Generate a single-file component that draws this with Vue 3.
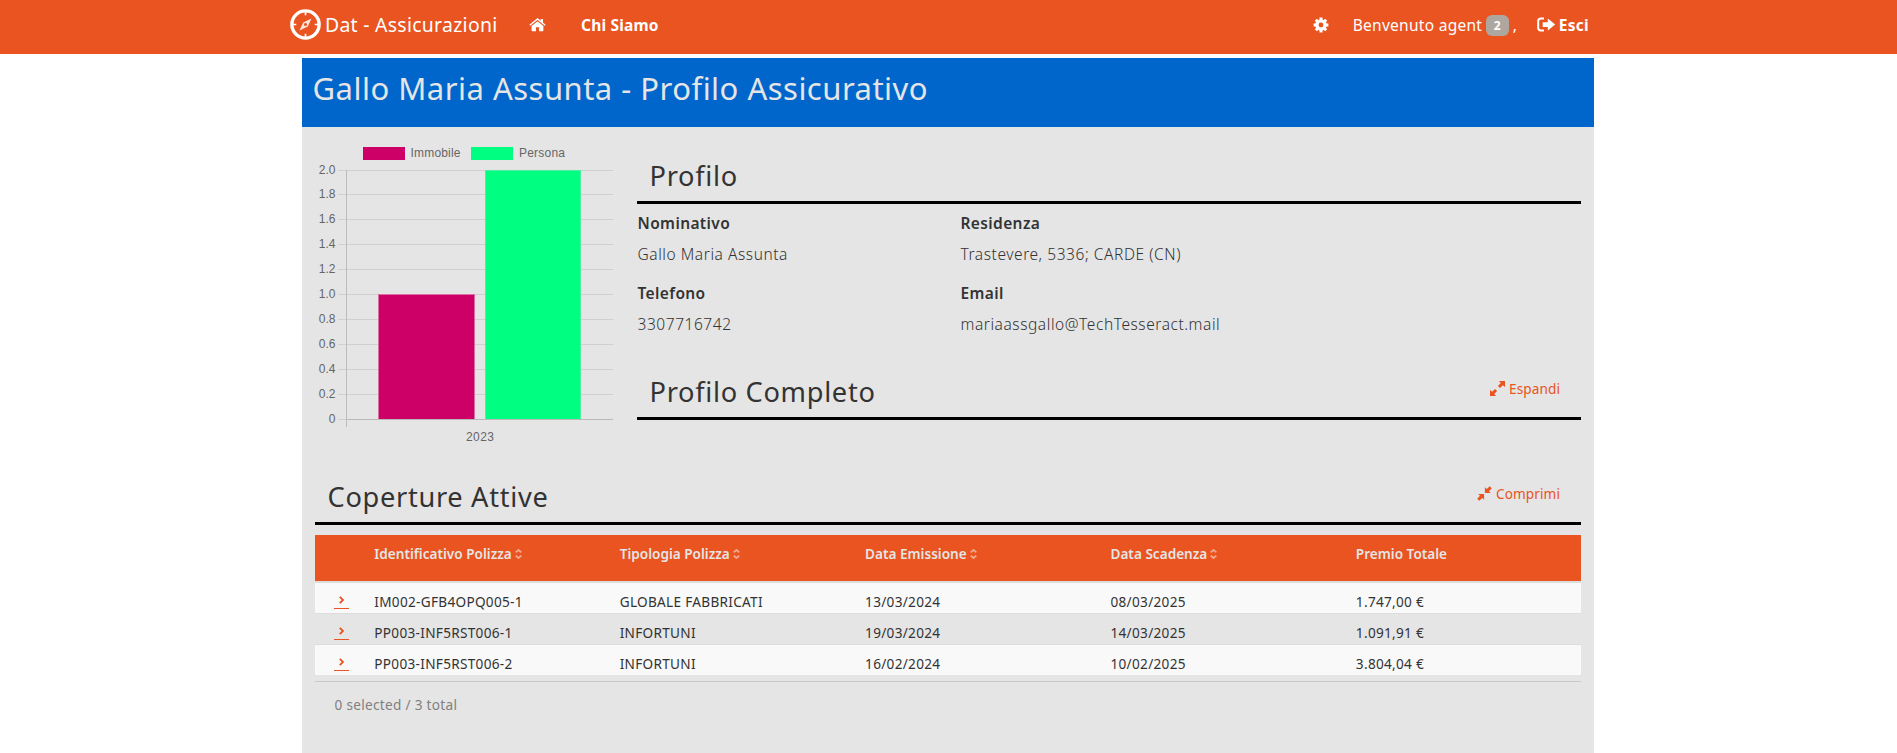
<script setup>
const ticks = ['2.0', '1.8', '1.6', '1.4', '1.2', '1.0', '0.8', '0.6', '0.4', '0.2', '0'].map((label, i) => ({
  label,
  y: Math.floor(43 + i * 24.92) + 0.5,
}))

const fields = [
  { label: 'Nominativo', value: 'Gallo Maria Assunta' },
  { label: 'Residenza', value: 'Trastevere, 5336; CARDE (CN)' },
  { label: 'Telefono', value: '3307716742' },
  { label: 'Email', value: 'mariaassgallo@TechTesseract.mail' },
]

const columns = [
  { title: 'Identificativo Polizza', sortable: true },
  { title: 'Tipologia Polizza', sortable: true },
  { title: 'Data Emissione', sortable: true },
  { title: 'Data Scadenza', sortable: true },
  { title: 'Premio Totale', sortable: false },
]

const policies = [
  ['IM002-GFB4OPQ005-1', 'GLOBALE FABBRICATI', '13/03/2024', '08/03/2025', '1.747,00 €'],
  ['PP003-INF5RST006-1', 'INFORTUNI', '19/03/2024', '14/03/2025', '1.091,91 €'],
  ['PP003-INF5RST006-2', 'INFORTUNI', '16/02/2024', '10/02/2025', '3.804,04 €'],
]
</script>

<template>
  <div class="page">
    <header class="navbar">
      <svg class="logo" width="31" height="31" viewBox="0 0 31 31">
        <circle cx="15.5" cy="15.5" r="13.600" fill="none" stroke="#fff" stroke-width="3.400" />
        <path d="M15.500 2.500v3.800M15.500 24.700v3.800M2.500 15.500h3.800M24.700 15.500h3.800" stroke="#fff" stroke-width="1.700" />
        <path fill-rule="evenodd" d="M21.500 9.500 17.800 17.400 9.500 21.500 13.200 13.600ZM15.500 13.900a1.600 1.600 0 1 0 .01 0Z" fill="#fff" fill-opacity=".85" />
      </svg>
      <span class="brand">Dat - Assicurazioni</span>
      <svg class="home" width="17" height="14" viewBox="0 0 17 14">
        <path d="M8.500 3.200 14.400 8.100V12.600a.6.6 0 0 1-.6.6H10.100V9.300H7V13.200H3.200a.6.6 0 0 1-.6-.6V8.100Z" fill="#fff" />
        <path d="M.8 7.200 8.500.9 16.200 7.200" fill="none" stroke="#fff" stroke-width="1.400" />
        <path d="M11.700 1h2.300v4.400l-2.300-2Z" fill="#fff" />
      </svg>
      <a class="about">Chi Siamo</a>
      <div class="user">
        <svg class="gear" width="16" height="16" viewBox="0 0 16 16">
          <path d="M8 .6V15.400M.6 8H15.400M2.800 2.800l10.400 10.400M13.200 2.800 2.800 13.200" stroke="#fff" stroke-width="3" />
          <circle cx="8" cy="8" r="4.100" fill="none" stroke="#fff" stroke-width="3.400" />
          <circle cx="8" cy="8" r="2.400" fill="#e95420" />
        </svg>
        <span class="welcome">Benvenuto agent</span>
        <span class="badge">2</span>
        <span class="comma">,</span>
        <svg class="exit" width="19" height="16" viewBox="0 0 19 16">
          <path d="M7 1.500H3.600A2.400 2.400 0 0 0 1.200 3.900v7.200a2.400 2.400 0 0 0 2.400 2.400H7" fill="none" stroke="#fff" stroke-width="2" />
          <path d="M5.700 5.200h5.100V1.600l7.400 6-7.400 6V9.900H5.700Z" fill="#fff" />
        </svg>
        <a class="logout">Esci</a>
      </div>
    </header>

    <main class="panel">
      <h1 class="title">Gallo Maria Assunta - Profilo Assicurativo</h1>

      <div class="overview">
        <svg class="chart" width="335" height="320" viewBox="0 0 335 320">
          <g class="legend">
            <rect x="61" y="20" width="42" height="13" fill="#cc0066" />
            <text x="108.500" y="30" textLength="50">Immobile</text>
            <rect x="169" y="20" width="42" height="13" fill="#00ff80" />
            <text x="217" y="30" textLength="46">Persona</text>
          </g>
          <g v-for="t in ticks" :key="t.label">
            <line x1="36" x2="311" :y1="t.y" :y2="t.y" stroke="#d0d0d0" />
            <text x="33.500" :y="t.y + 3.800" text-anchor="end">{{ t.label }}</text>
          </g>
          <rect x="76.500" y="167.500" width="96" height="125" fill="#cc0066" stroke="#dd6da2" />
          <rect x="183.500" y="43.500" width="95" height="249" fill="#00ff80" stroke="#4df0a0" />
          <path d="M44.500 43V300" stroke="#bcbcbc" />
          <path d="M44 292.500H311" stroke="#b9b9b9" />
          <text x="164" y="313.500" textLength="28">2023</text>
        </svg>

        <div class="details">
          <section class="section">
            <div class="section-head"><h2>Profilo</h2></div>
            <dl class="fields">
              <div v-for="f in fields" :key="f.label" class="field">
                <dt>{{ f.label }}</dt>
                <dd>{{ f.value }}</dd>
              </div>
            </dl>
          </section>
          <section class="section">
            <div class="section-head">
              <h2>Profilo Completo</h2>
              <a class="toggle">
                <svg width="15" height="15" viewBox="0 0 15 15" fill="#e95420">
                  <path d="M9 0H15V6L12.900 4.200 10 7.100 7.900 5 10.800 2.100Z" />
                  <path d="M6 15H0V9L2.100 10.800 5 7.900 7.100 10 4.200 12.900Z" />
                </svg>
                <span class="expand">Espandi</span>
              </a>
            </div>
          </section>
        </div>
      </div>

      <section class="section policies">
        <div class="section-head">
          <h2>Coperture Attive</h2>
          <a class="toggle">
            <svg width="15" height="15" viewBox="0 0 15 15" fill="#e95420">
              <path d="M7.900 7.100V1.200L9.800 3 12.700.2 14.800 2.300 12 5.200 13.800 7.100Z" />
              <path d="M7.100 7.900V13.800L5.200 12 2.300 14.800.2 12.700 3 9.800 1.200 7.900Z" />
            </svg>
            <span>Comprimi</span>
          </a>
        </div>

        <div class="table">
          <div class="row head">
            <span></span>
            <span v-for="c in columns" :key="c.title">{{ c.title }}<svg v-if="c.sortable" class="sort" width="7" height="10" viewBox="0 0 7 10"><path d="M.7 3.400 3.500 1 6.300 3.400M.7 6.600 3.500 9 6.300 6.600" /></svg></span>
          </div>
          <div v-for="p in policies" :key="p[0]" class="row body">
            <a class="open">
              <svg width="5" height="8" viewBox="0 0 5 8"><path d="M.8.8 4 4 .8 7.200" /></svg>
            </a>
            <span v-for="(cell, i) in p" :key="i">{{ cell }}</span>
          </div>
        </div>
        <footer class="summary">0 selected / 3 total</footer>
      </section>
    </main>
  </div>
</template>

<style>
html, body { margin: 0; background: #fff; overflow: hidden; }
</style>

<style scoped>
.page { width: 1897px; height: 753px; display: flex; flex-direction: column; overflow: hidden; font-family: "Noto Sans", "Open Sans", sans-serif; color: #333; }
h1, h2, dl, dd { margin: 0; font-weight: 400; }
svg { flex: none; display: block; }
.navbar { flex: none; box-sizing: border-box; height: 54px; padding: 0 308px 5px 290px; display: flex; align-items: center; background: #e95420; color: #fff; white-space: nowrap; }
.brand { margin-left: 4px; width: 204px; font-size: 19.400px; letter-spacing: .29px; }
.about { margin-left: 35px; font-size: 15.500px; font-weight: 700; letter-spacing: .2px; }
.user { margin-left: auto; display: flex; align-items: center; font-size: 15.500px; }
.welcome { margin-left: 24px; width: 133px; letter-spacing: .28px; }
.badge { width: 23px; height: 21px; margin-top: 2px; border-radius: 6px; background: #aea79f; font-size: 12px; line-height: 22px; font-weight: 700; text-align: center; }
.comma { margin-left: 4px; width: 24px; }
.logout { margin-left: 3px; font-weight: 700; letter-spacing: .3px; }

.panel { flex: 1; width: 1292px; margin: 4px 0 0 302px; background: #e5e5e5; }
.title { height: 69px; padding-left: 10.500px; background: #0066cc; color: #e5e5e5; font-size: 31px; line-height: 61px; letter-spacing: .49px; }
.overview { height: 344px; display: flex; }
.chart text { font: 12px "Liberation Sans", Arial, sans-serif; fill: #666; }
.details { width: 944px; padding-top: 23px; }
.section-head { display: flex; justify-content: space-between; align-items: center; height: 51px; padding: 0 21px 0 12.500px; border-bottom: 3px solid #000; }
.section-head h2 { font-size: 27.200px; line-height: 51px; letter-spacing: .7px; }
.toggle { display: flex; align-items: center; gap: 4px; margin-bottom: 6px; font-size: 13.600px; letter-spacing: .1px; color: #e95420; }
.fields { height: 158px; padding-top: 4px; display: grid; grid-template-columns: 323px 1fr; row-gap: 8px; align-content: start; font-size: 15.500px; line-height: 31px; box-sizing: content-box; }
.fields dt { padding-left: .5px; font-weight: 600; letter-spacing: .38px; }
.fields dd { padding-left: .5px; font-weight: 300; letter-spacing: .56px; }

.policies { width: 1266px; margin-left: 13px; }
.table { margin-top: 10px; padding-bottom: 6px; border-bottom: 1px solid #c8c8c8; }
.row { display: grid; grid-template-columns: 59.300px repeat(4, 245.400px) 1fr; font-size: 13.600px; }
.head { height: 46px; background: #e95420; border-bottom: 2px solid #ddd; color: #e5e5e5; font-weight: 600; line-height: 37px; letter-spacing: 0; }
.sort { display: inline-block; margin-left: 3px; fill: none; stroke: #f2a88d; stroke-width: 1.900; }
.body { height: 30px; border-bottom: 1px solid #ddd; line-height: 37px; letter-spacing: .3px; }
.body:nth-child(even) { background: #f9f9f9; }
.body:last-child { border-bottom: 0; }
.open { width: 15px; height: 12px; margin: 13px 0 0 19px; border-bottom: 1px solid #e95420; display: flex; justify-content: center; }
.open path { fill: none; stroke: #e95420; stroke-width: 1.800; }
.summary { padding-left: 19.500px; font-size: 13.600px; line-height: 46px; letter-spacing: .3px; color: #808080; }
</style>
